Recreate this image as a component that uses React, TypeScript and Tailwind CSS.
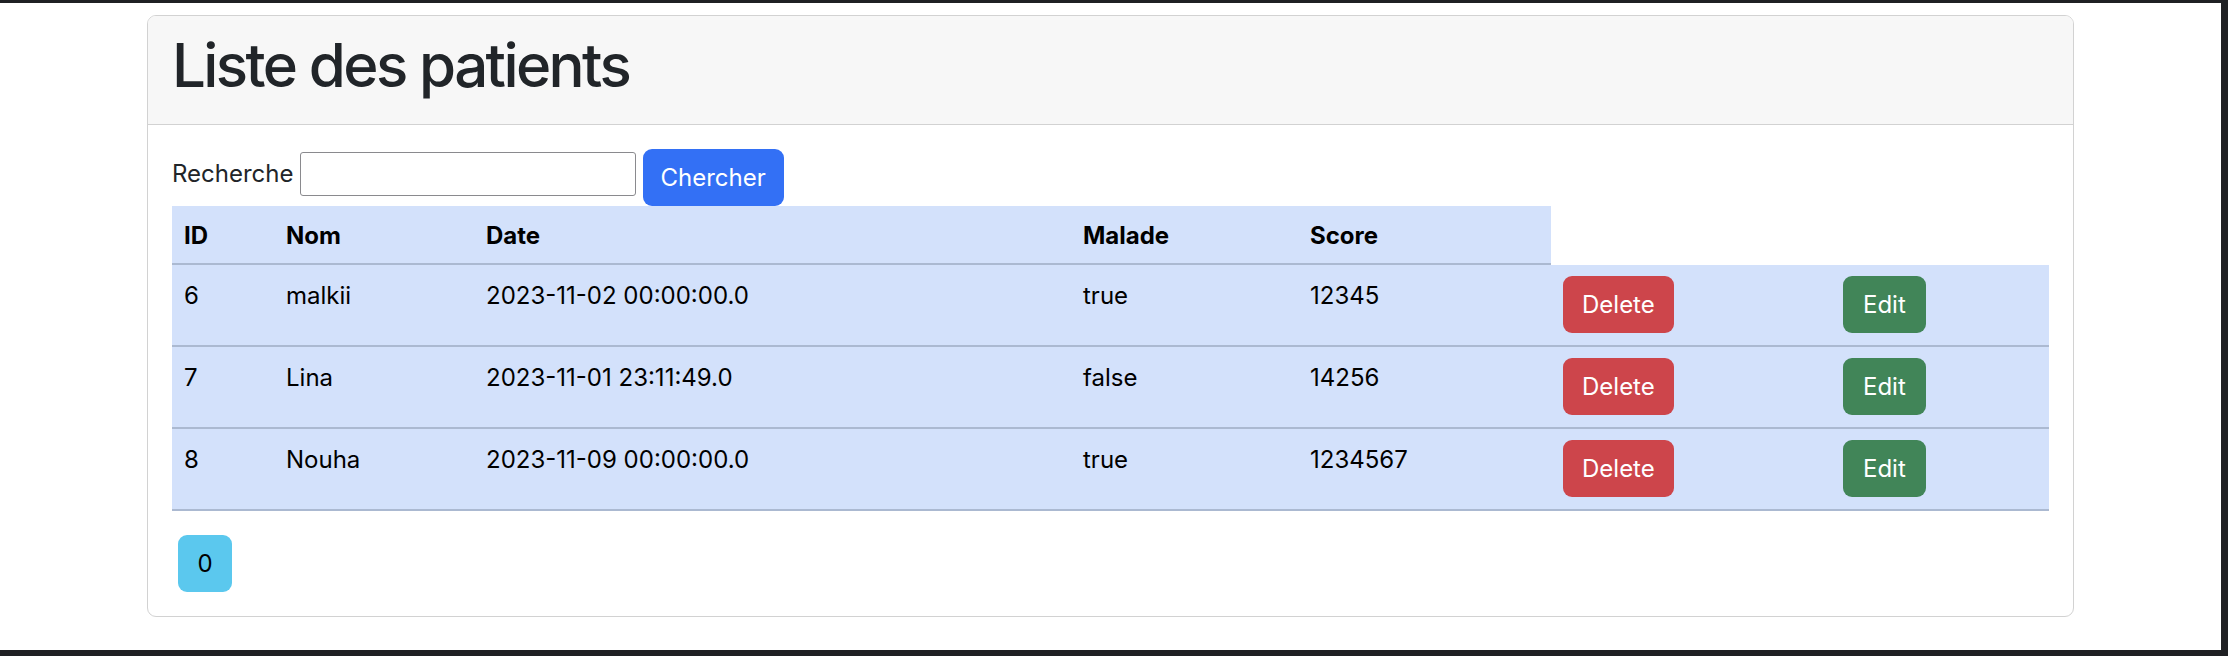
import React from 'react';

interface Patient {
  id: number;
  nom: string;
  date: string;
  malade: boolean;
  score: number;
}

const patients: Patient[] = [
  { id: 6, nom: 'malkii', date: '2023-11-02 00:00:00.0', malade: true, score: 12345 },
  { id: 7, nom: 'Lina', date: '2023-11-01 23:11:49.0', malade: false, score: 14256 },
  { id: 8, nom: 'Nouha', date: '2023-11-09 00:00:00.0', malade: true, score: 1234567 },
];

const headers = [
  { label: 'ID', w: 'w-[102px]' },
  { label: 'Nom', w: 'w-[200px]' },
  { label: 'Date', w: 'w-[597px]' },
  { label: 'Malade', w: 'w-[227px]' },
  { label: 'Score', w: 'w-[253px]' },
];

export default function App() {
  return (
    <div
      className="w-full h-[656px] bg-white border-t-[3px] border-r-[7px] border-b-[6px] border-[#1f2023] pl-[147px] pt-[12px] text-[#212529]"
      style={{ fontFamily: 'Inter, "Noto Sans", sans-serif' }}
    >
      <div className="w-[1927px] border border-[#d2d2d2] rounded-[9px] overflow-hidden">
        {/* Card header */}
        <div className="bg-[#f7f7f7] border-b border-[#d2d2d2] px-[24px] pt-[13px] pb-[11px]">
          <h1 className="text-[60px] leading-[72px] font-medium mb-[12px] tracking-[-2.6px]">Liste des patients</h1>
        </div>

        {/* Card body */}
        <div className="p-[24px]">
          {/* Search */}
          <div className="flex items-center">
            <label className="text-[24px] leading-[36px] mb-[7px] mr-[6px]">Recherche</label>
            <input
              type="text"
              className="w-[336px] h-[44px] border border-[#8a8a8e] rounded-[3px] mb-[7px] mr-[7px] bg-white outline-none"
            />
            <button className="h-[57px] px-[18px] bg-[#3370f5] text-white text-[24px] leading-[36px] rounded-[9px]">
              Chercher
            </button>
          </div>

          {/* Table */}
          <div className="text-[24px] leading-[36px] text-black">
            <div className="flex">
              {headers.map((h) => (
                <div
                  key={h.label}
                  className={`${h.w} bg-[#d3e1fb] border-b-2 border-[#abb9d1] px-[12px] pt-[12px] pb-[9px] font-bold`}
                >
                  {h.label}
                </div>
              ))}
            </div>
            {patients.map((p) => (
              <div key={p.id} className="flex bg-[#d3e1fb] border-b-2 border-[#abb9d1] h-[82px]">
                <div className="w-[102px] px-[12px] pt-[13px]">{p.id}</div>
                <div className="w-[200px] px-[12px] pt-[13px]">{p.nom}</div>
                <div className="w-[597px] px-[12px] pt-[13px]">{p.date}</div>
                <div className="w-[227px] px-[12px] pt-[13px]">{p.malade ? 'true' : 'false'}</div>
                <div className="w-[253px] px-[12px] pt-[13px]">{p.score}</div>
                <div className="w-[280px] px-[12px] pt-[11px]">
                  <button className="h-[57px] px-[19px] bg-[#cd454b] text-white rounded-[9px]">Delete</button>
                </div>
                <div className="w-[218px] px-[12px] pt-[11px]">
                  <button className="h-[57px] px-[20px] bg-[#418558] text-white rounded-[9px]">Edit</button>
                </div>
              </div>
            ))}
          </div>

          {/* Pagination */}
          <div className="mt-[24px] pl-[6px]">
            <button className="h-[57px] w-[54px] bg-[#5bc8ee] text-black text-[24px] leading-[36px] rounded-[9px]">
              0
            </button>
          </div>
        </div>
      </div>
    </div>
  );
}
